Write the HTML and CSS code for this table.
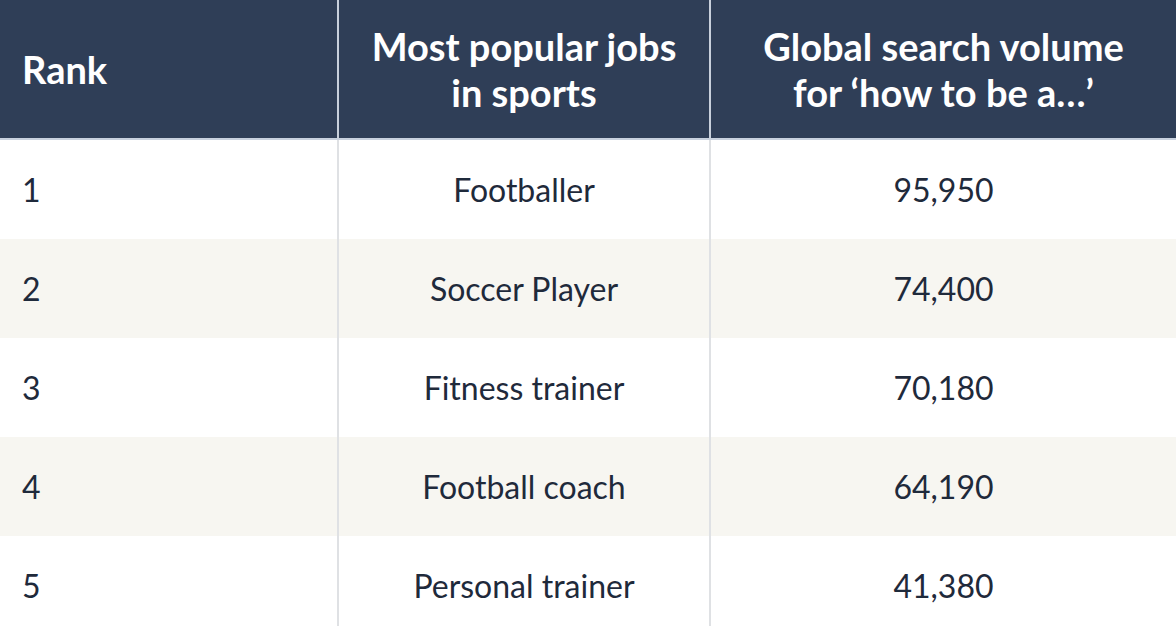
FILE: index.html
```html
<!DOCTYPE html>
<html lang="en">
<head>
<meta charset="utf-8">
<title>Most popular jobs in sports</title>
<link rel="stylesheet" href="styles.css">
</head>
<body>
<table class="jobs">
  <colgroup>
    <col class="c-rank">
    <col class="c-job">
    <col class="c-vol">
  </colgroup>
  <thead>
    <tr>
      <th class="rank">Rank</th>
      <th>Most popular jobs<br>in sports</th>
      <th>Global search volume<br>for ‘how to be a…’</th>
    </tr>
  </thead>
  <tbody>
    <tr><td class="rank">1</td><td>Footballer</td><td>95,950</td></tr>
    <tr class="alt"><td class="rank">2</td><td>Soccer Player</td><td>74,400</td></tr>
    <tr><td class="rank">3</td><td>Fitness trainer</td><td>70,180</td></tr>
    <tr class="alt"><td class="rank">4</td><td>Football coach</td><td>64,190</td></tr>
    <tr><td class="rank">5</td><td>Personal trainer</td><td>41,380</td></tr>
  </tbody>
</table>
</body>
</html>
```

FILE: styles.css
```css
html, body {
  margin: 0;
  padding: 0;
  background: #ffffff;
}
body {
  font-family: Lato, "Noto Sans", "Liberation Sans", sans-serif;
  color: #1f2a3b;
}
.jobs {
  width: 1176px;
  border-collapse: collapse;
  table-layout: fixed;
}
.c-rank { width: 338px; }
.c-job { width: 372px; }
.c-vol { width: 466px; }

.jobs th {
  background: #2f3e57;
  color: #ffffff;
  font-weight: 700;
  font-size: 38px;
  line-height: 46px;
  height: 138px;
  padding: 0;
  text-align: center;
  border-bottom: 2px solid #c8d1de;
}
.jobs th + th {
  border-left: 2px solid #c8d0dc;
}
.jobs td {
  font-size: 32px;
  height: 99px;
  padding: 0;
  text-align: center;
  vertical-align: middle;
}
.jobs td + td {
  border-left: 2px solid #dfe1e4;
}
.jobs .rank {
  text-align: left;
  padding-left: 22px;
}
.jobs tr.alt td {
  background: #f7f6f1;
}
```
